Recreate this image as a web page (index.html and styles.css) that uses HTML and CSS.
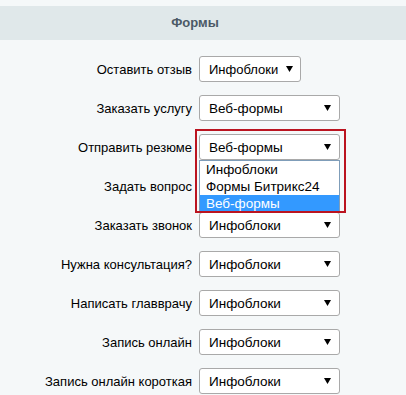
FILE: index.html
```html
<!DOCTYPE html>
<html lang="ru">
<head>
    <meta charset="UTF-8">
    <title>Формы</title>
    <link rel="stylesheet" href="styles.css">
</head>
<body>
    <div class="panel">
        <div class="panel-head">Формы</div>
        <div class="form-grid">
            <div class="row">
                <label>Оставить отзыв</label>
                <div class="select short"><span>Инфоблоки</span><svg class="arrow" width="7" height="6" viewBox="0 0 7 6"><path d="M0 0H7L3.5 6Z"/></svg></div>
            </div>
            <div class="row">
                <label>Заказать услугу</label>
                <div class="select"><span>Веб-формы</span><svg class="arrow" width="7" height="6" viewBox="0 0 7 6"><path d="M0 0H7L3.5 6Z"/></svg></div>
            </div>
            <div class="row">
                <label>Отправить резюме</label>
                <div class="select-wrap">
                    <div class="select"><span>Веб-формы</span><svg class="arrow" width="7" height="6" viewBox="0 0 7 6"><path d="M0 0H7L3.5 6Z"/></svg></div>
                    <ul class="dropdown">
                        <li>Инфоблоки</li>
                        <li>Формы Битрикс24</li>
                        <li class="active">Веб-формы</li>
                    </ul>
                    <div class="highlight"></div>
                </div>
            </div>
            <div class="row">
                <label>Задать вопрос</label>
                <div class="select covered"><span>Инфоблоки</span><svg class="arrow" width="7" height="6" viewBox="0 0 7 6"><path d="M0 0H7L3.5 6Z"/></svg></div>
            </div>
            <div class="row">
                <label>Заказать звонок</label>
                <div class="select"><span>Инфоблоки</span><svg class="arrow" width="7" height="6" viewBox="0 0 7 6"><path d="M0 0H7L3.5 6Z"/></svg></div>
            </div>
            <div class="row">
                <label>Нужна консультация?</label>
                <div class="select"><span>Инфоблоки</span><svg class="arrow" width="7" height="6" viewBox="0 0 7 6"><path d="M0 0H7L3.5 6Z"/></svg></div>
            </div>
            <div class="row">
                <label>Написать главврачу</label>
                <div class="select"><span>Инфоблоки</span><svg class="arrow" width="7" height="6" viewBox="0 0 7 6"><path d="M0 0H7L3.5 6Z"/></svg></div>
            </div>
            <div class="row">
                <label>Запись онлайн</label>
                <div class="select"><span>Инфоблоки</span><svg class="arrow" width="7" height="6" viewBox="0 0 7 6"><path d="M0 0H7L3.5 6Z"/></svg></div>
            </div>
            <div class="row">
                <label>Запись онлайн короткая</label>
                <div class="select"><span>Инфоблоки</span><svg class="arrow" width="7" height="6" viewBox="0 0 7 6"><path d="M0 0H7L3.5 6Z"/></svg></div>
            </div>
        </div>
    </div>
</body>
</html>
```

FILE: styles.css
```css
body {
    margin: 0;
    padding: 6px 0 0;
    background-color: #f5f8f9;
    color: #000;
    font-family: "Liberation Sans", Arial, sans-serif;
    font-size: 13px;
    overflow: hidden;
}
.panel-head {
    height: 34px;
    line-height: 34px;
    background-color: #e0e8ea;
    color: #4b5966;
    font-weight: bold;
    text-align: center;
    padding-right: 16px;
}
.form-grid {
    padding-top: 16px;
}
.row {
    display: grid;
    grid-template-columns: 192px auto;
    column-gap: 7px;
    align-items: center;
    margin-bottom: 13px;
}
.row label {
    text-align: right;
    white-space: nowrap;
}
.select {
    box-sizing: border-box;
    width: 141px;
    height: 26px;
    display: flex;
    align-items: center;
    justify-content: space-between;
    padding: 0 8px 0 9px;
    background-color: #fff;
    border: 1px solid #a9a9a9;
    border-radius: 3px;
    font-size: 13.5px;
}
.select.short {
    width: 102px;
    padding-right: 7px;
    font-size: 13px;
}
/* скрыт под открытым списком */
.select.covered span {
    visibility: hidden;
}
.arrow path {
    fill: #000;
}
.select-wrap {
    position: relative;
    width: 141px;
}
.dropdown {
    position: absolute;
    top: 26px;
    left: 0;
    width: 141px;
    box-sizing: border-box;
    margin: 0;
    padding: 0;
    list-style: none;
    background-color: #fff;
    border: 1px solid #7f9db9;
    z-index: 2;
    font-size: 13.5px;
}
.dropdown li {
    height: 17px;
    line-height: 17px;
    padding-left: 6px;
}
.dropdown li.active {
    background-color: #3399ff;
    color: #fff;
}
.highlight {
    position: absolute;
    top: -5px;
    left: -4px;
    width: 151px;
    height: 84px;
    box-sizing: border-box;
    border: 2px solid #bb1420;
    z-index: 3;
}
```
